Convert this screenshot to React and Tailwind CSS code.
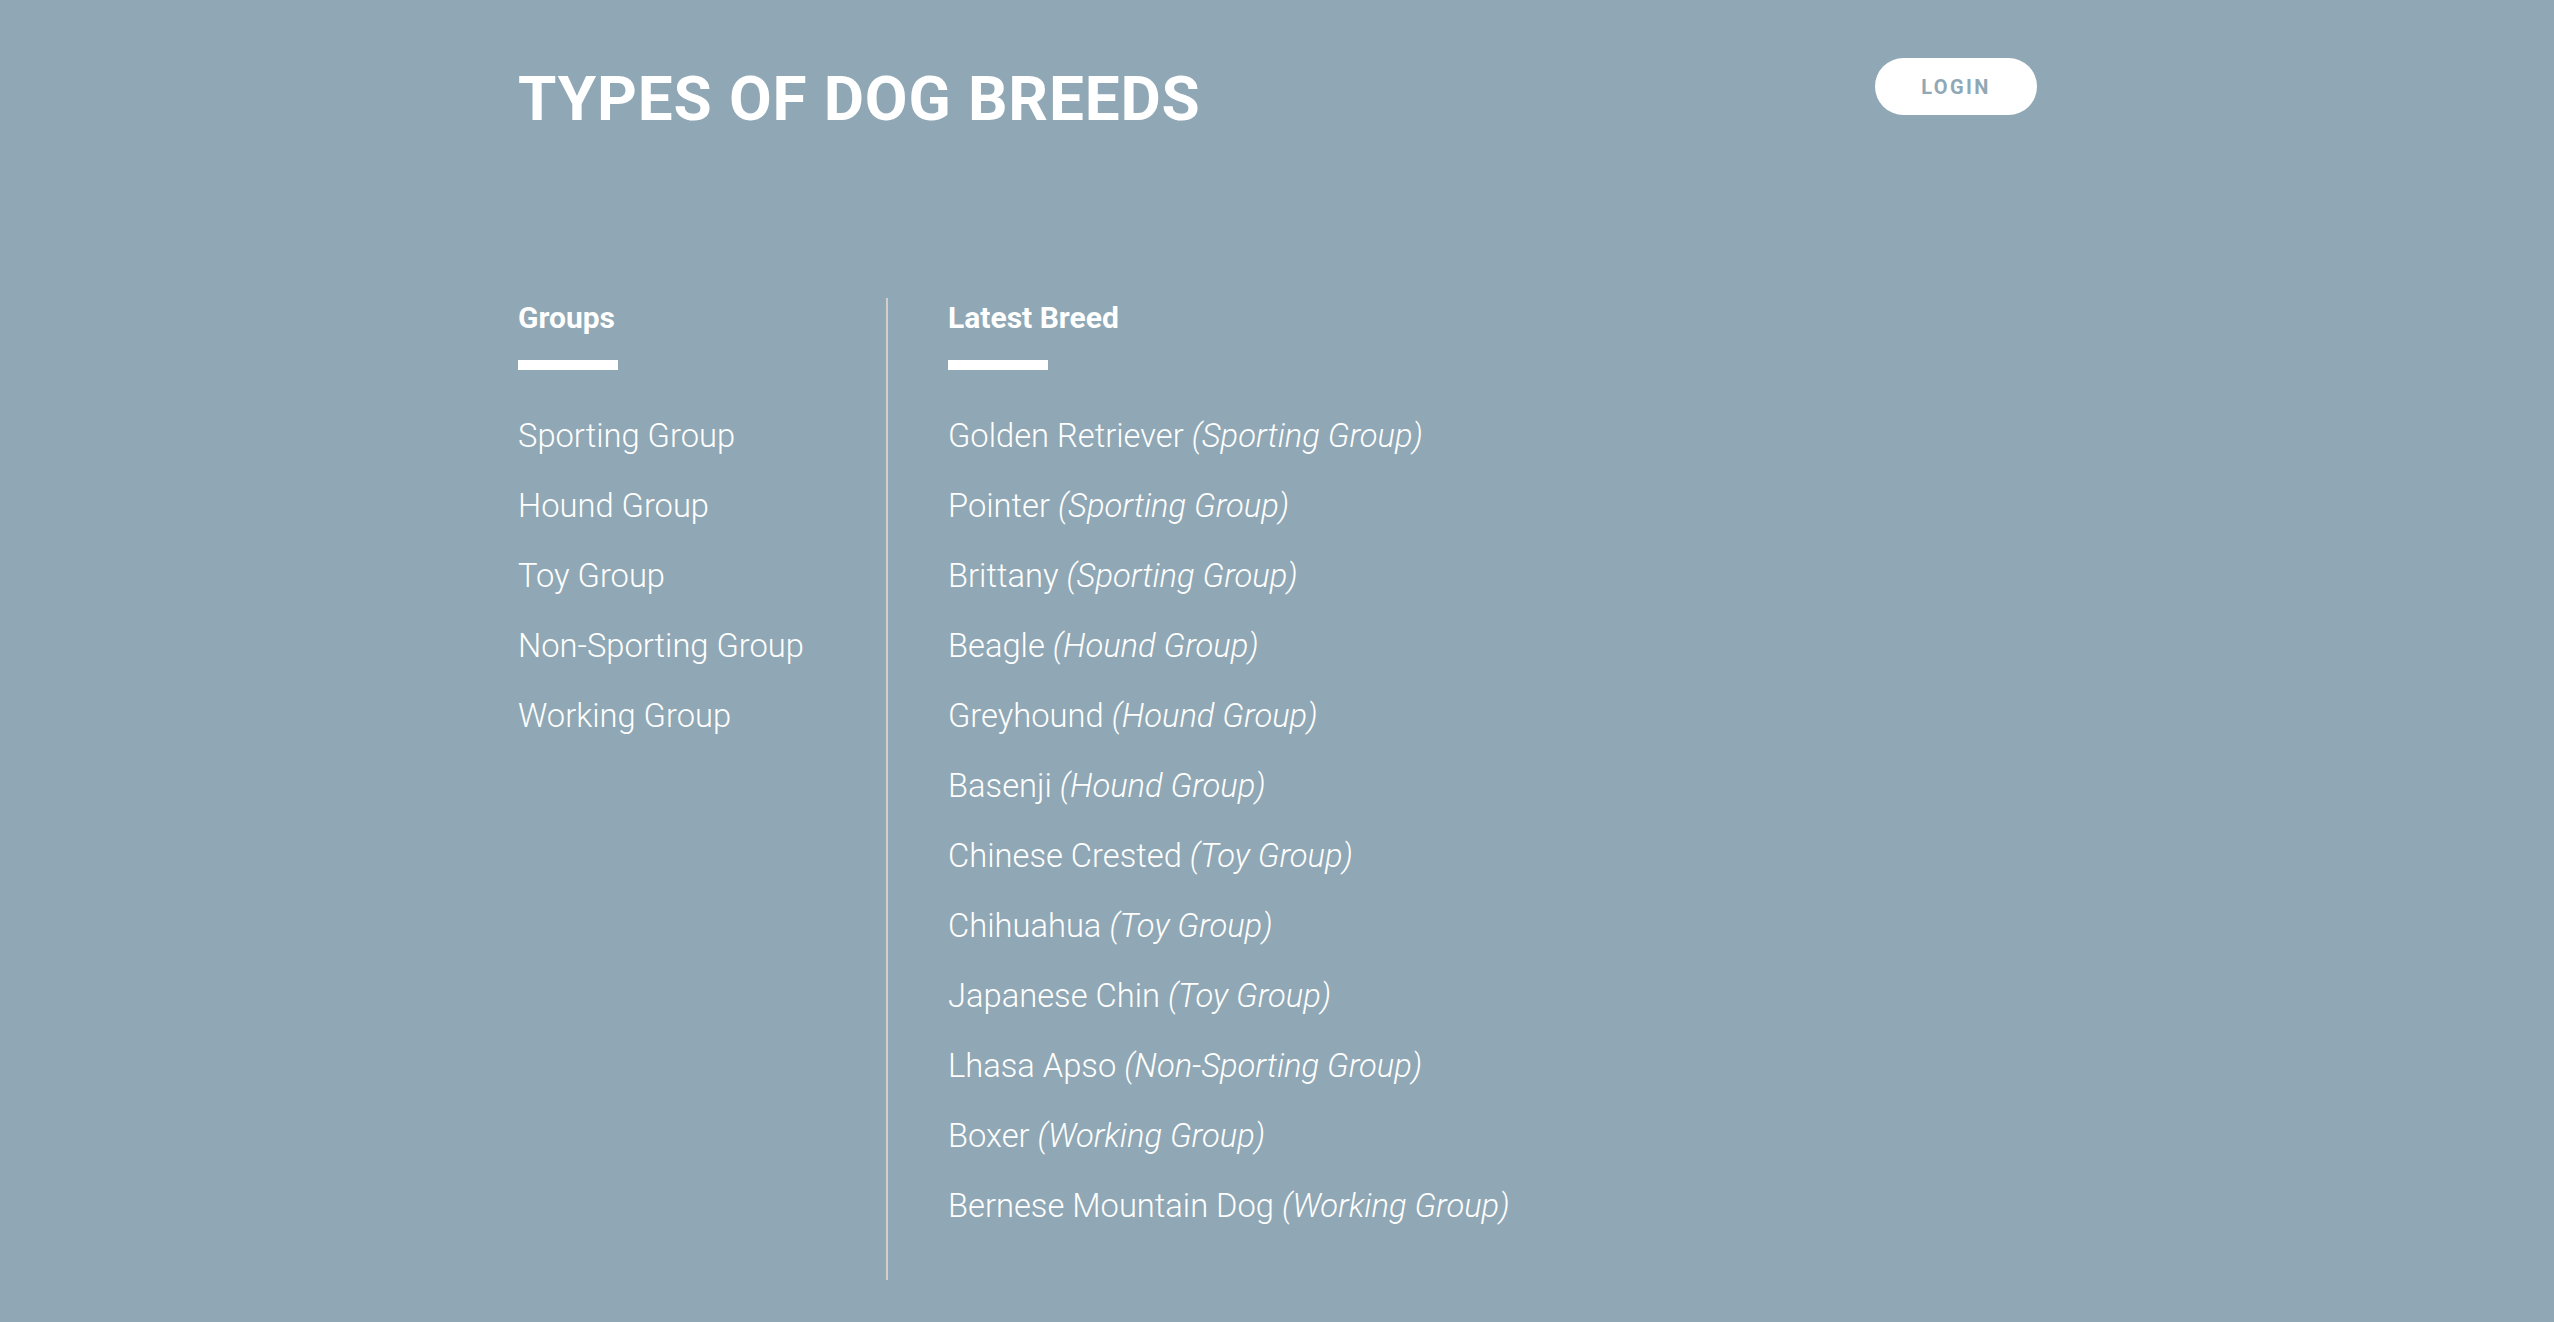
const groups = ['Sporting Group', 'Hound Group', 'Toy Group', 'Non-Sporting Group', 'Working Group']

const breeds = [
  ['Golden Retriever', 'Sporting Group'],
  ['Pointer', 'Sporting Group'],
  ['Brittany', 'Sporting Group'],
  ['Beagle', 'Hound Group'],
  ['Greyhound', 'Hound Group'],
  ['Basenji', 'Hound Group'],
  ['Chinese Crested', 'Toy Group'],
  ['Chihuahua', 'Toy Group'],
  ['Japanese Chin', 'Toy Group'],
  ['Lhasa Apso', 'Non-Sporting Group'],
  ['Boxer', 'Working Group'],
  ['Bernese Mountain Dog', 'Working Group'],
]

function SectionTitle({ children }) {
  return (
    <div className="pt-[5px]">
      <h2 className="text-[30px] font-bold leading-none text-white">{children}</h2>
      <div className="mt-[27px] h-[10px] w-[100px] bg-white" />
    </div>
  )
}

export default function App() {
  return (
    <div
      className="min-h-screen bg-[#90a8b5] text-white"
      style={{ fontFamily: 'Roboto, "Liberation Sans", sans-serif' }}
    >
      <div className="mx-auto w-[1520px] pt-[58px] pl-px">
        <header className="flex items-start justify-between">
          <h1 className="mt-[10px] text-[62px] font-bold leading-none tracking-[0.014em]">TYPES OF DOG BREEDS</h1>
          <button
            type="button"
            className="flex h-[57px] w-[162px] items-center justify-center rounded-full bg-white text-[20px] font-bold tracking-[0.12em] text-[#90a8b5]"
          >
            LOGIN
          </button>
        </header>

        <div className="mt-[168px] flex">
          <div className="w-[368px]">
            <SectionTitle>Groups</SectionTitle>
            <ul className="mt-[31px]">
              {groups.map((group) => (
                <li key={group} className="text-[32.7px] font-light leading-[70px]">
                  {group}
                </li>
              ))}
            </ul>
          </div>

          <div className="border-l-2 border-[#d3cfcb] pl-[60px] pb-[39px]">
            <SectionTitle>Latest Breed</SectionTitle>
            <ul className="mt-[31px]">
              {breeds.map(([name, group]) => (
                <li key={name} className="text-[32.7px] font-light leading-[70px]">
                  {name} <em className="italic">({group})</em>
                </li>
              ))}
            </ul>
          </div>
        </div>
      </div>
    </div>
  )
}
